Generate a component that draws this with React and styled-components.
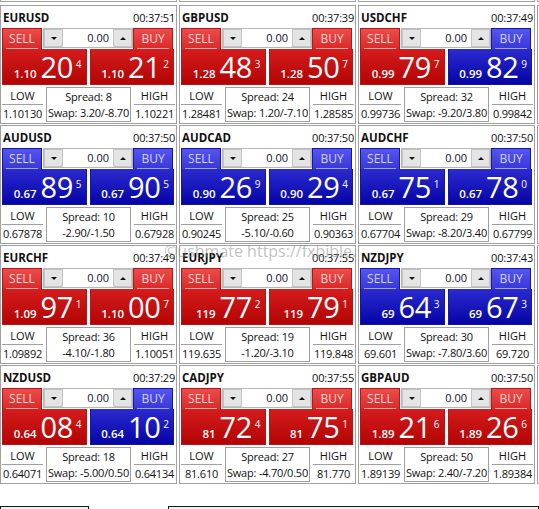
import React from "react";
import styled, { createGlobalStyle } from "styled-components";

const Global = createGlobalStyle`
  html, body { margin: 0; padding: 0; background: #ffffff; }
  body { font-family: "Open Sans", "Noto Sans", sans-serif; color: #111; }
`;

const palette = {
  red: {
    tabTop: "#ec4c4a",
    tabBottom: "#d92a28",
    panelTop: "#d61c1c",
    panelBottom: "#b20404",
    edge: "#b81616",
    text: "#ffd4d4",
    line: "#f4a4a4",
  },
  blue: {
    tabTop: "#5454f2",
    tabBottom: "#3838da",
    panelTop: "#2a2ad0",
    panelBottom: "#0505a6",
    edge: "#16169e",
    text: "#d4d4ff",
    line: "#a4a4f4",
  },
};

const tiles = [
  { sym: "EURUSD", time: "00:37:51", sell: ["1.10", "20", "4"], buy: ["1.10", "21", "2"], sc: "red", bc: "red", low: "1.10130", spread: "8", swap: "Swap: 3.20/-8.70", high: "1.10221" },
  { sym: "GBPUSD", time: "00:37:39", sell: ["1.28", "48", "3"], buy: ["1.28", "50", "7"], sc: "red", bc: "red", low: "1.28481", spread: "24", swap: "Swap: 1.20/-7.10", high: "1.28585" },
  { sym: "USDCHF", time: "00:37:49", sell: ["0.99", "79", "7"], buy: ["0.99", "82", "9"], sc: "red", bc: "blue", low: "0.99736", spread: "32", swap: "Swap: -9.20/3.80", high: "0.99842" },
  { sym: "AUDUSD", time: "00:37:50", sell: ["0.67", "89", "5"], buy: ["0.67", "90", "5"], sc: "blue", bc: "blue", low: "0.67878", spread: "10", swap: "-2.90/-1.50", high: "0.67928" },
  { sym: "AUDCAD", time: "00:37:50", sell: ["0.90", "26", "9"], buy: ["0.90", "29", "4"], sc: "blue", bc: "blue", low: "0.90245", spread: "25", swap: "-5.10/-0.60", high: "0.90363" },
  { sym: "AUDCHF", time: "00:37:50", sell: ["0.67", "75", "1"], buy: ["0.67", "78", "0"], sc: "blue", bc: "blue", low: "0.67704", spread: "29", swap: "Swap: -8.20/3.40", high: "0.67799" },
  { sym: "EURCHF", time: "00:37:49", sell: ["1.09", "97", "1"], buy: ["1.10", "00", "7"], sc: "red", bc: "red", low: "1.09892", spread: "36", swap: "-4.10/-1.80", high: "1.10051" },
  { sym: "EURJPY", time: "00:37:55", sell: ["119", "77", "2"], buy: ["119", "79", "1"], sc: "red", bc: "red", low: "119.635", spread: "19", swap: "-1.20/-3.10", high: "119.848" },
  { sym: "NZDJPY", time: "00:37:43", sell: ["69", "64", "3"], buy: ["69", "67", "3"], sc: "blue", bc: "blue", low: "69.601", spread: "30", swap: "Swap: -7.80/3.60", high: "69.720" },
  { sym: "NZDUSD", time: "00:37:29", sell: ["0.64", "08", "4"], buy: ["0.64", "10", "2"], sc: "red", bc: "blue", low: "0.64071", spread: "18", swap: "Swap: -5.00/0.50", high: "0.64134" },
  { sym: "CADJPY", time: "00:37:55", sell: ["81", "72", "4"], buy: ["81", "75", "1"], sc: "red", bc: "red", low: "81.610", spread: "27", swap: "Swap: -4.70/0.50", high: "81.770" },
  { sym: "GBPAUD", time: "00:37:50", sell: ["1.89", "21", "6"], buy: ["1.89", "26", "6"], sc: "red", bc: "red", low: "1.89139", spread: "50", swap: "Swap: 2.40/-7.20", high: "1.89384" },
];

const Page = styled.div`
  position: relative;
  width: 539px;
  height: 509px;
  overflow: hidden;
  background: #fff;
`;

const StubRow = styled.div`
  display: grid;
  grid-template-columns: repeat(4, 177px);
  column-gap: 2px;
  margin-bottom: 3px;
`;

const Stub = styled.div`
  height: 2px;
  box-sizing: border-box;
  border: 1px solid #a0a0a0;
  border-top: none;
`;

const Grid = styled.div`
  display: grid;
  grid-template-columns: repeat(4, 177px);
  grid-auto-rows: 119px;
  column-gap: 2px;
  row-gap: 1px;
`;

const Tile = styled.div`
  box-sizing: border-box;
  border: 1px solid #a0a0a0;
  background: #fff;
  display: flex;
  flex-direction: column;
  overflow: hidden;
`;

const Header = styled.div`
  height: 22px;
  display: flex;
  align-items: center;
  justify-content: space-between;
  padding: 1px 1px 0 2px;
  box-sizing: border-box;
  font-size: 11px;
  color: #111;
`;

const Symbol = styled.span`
  font-weight: 700;
  font-size: 11.5px;
`;

const Clock = styled.span`
  letter-spacing: -0.2px;
`;

const Trade = styled.div`
  margin: 0 2px 0 1px;
  display: flex;
  flex-direction: column;
`;

const TopRow = styled.div`
  height: 21px;
  display: flex;
  align-items: flex-start;
`;

const Tab = styled.div`
  width: 40px;
  height: 21px;
  box-sizing: border-box;
  padding: 0 3px;
  border: 1px solid ${(p) => palette[p.$c].edge};
  border-bottom: none;
  background: linear-gradient(
    to bottom,
    ${(p) => palette[p.$c].tabTop},
    ${(p) => palette[p.$c].tabBottom}
  );
  display: flex;
`;

const TabLabel = styled.span`
  flex: 1;
  text-align: center;
  font-size: 12px;
  line-height: 19px;
  height: 19px;
  color: ${(p) => palette[p.$c].text};
  border-bottom: 1px solid ${(p) => palette[p.$c].line};
`;

const Spinner = styled.div`
  width: 90px;
  height: 20px;
  margin-left: 1px;
  box-sizing: border-box;
  border: 1px solid #b8b8b8;
  background: #fff;
  display: flex;
`;

const SpinButton = styled.div`
  width: 19px;
  box-sizing: border-box;
  background: #e4e4e4;
  border: 1px solid #c4c4c4;
  display: flex;
  align-items: center;
  justify-content: center;
`;

const Arrow = styled.span`
  width: 0;
  height: 0;
  border-left: 3px solid transparent;
  border-right: 3px solid transparent;
  ${(p) =>
    p.$up
      ? "border-bottom: 3px solid #111;"
      : "border-top: 3px solid #111;"}
`;

const SpinValue = styled.div`
  flex: 1;
  text-align: right;
  padding-right: 4px;
  font-size: 11px;
  line-height: 18px;
  color: #101030;
`;

const Panels = styled.div`
  height: 36px;
  display: flex;
  gap: 3px;
`;

const Panel = styled.div`
  flex: 1;
  box-sizing: border-box;
  border: 1px solid ${(p) => palette[p.$c].edge};
  border-top: none;
  background: linear-gradient(
    to bottom,
    ${(p) => palette[p.$c].panelTop},
    ${(p) => palette[p.$c].panelBottom}
  );
  display: flex;
  justify-content: flex-end;
  align-items: baseline;
  padding: 3px 4px 0 0;
  color: #fff;
`;

const Handle = styled.span`
  font-size: 11.5px;
  font-weight: 600;
  line-height: 1;
  margin-right: 4px;
`;

const Pips = styled.span`
  font-size: 29px;
  line-height: 29px;
  letter-spacing: -0.5px;
`;

const Fraction = styled.span`
  align-self: flex-start;
  font-size: 10px;
  line-height: 10px;
  margin: 7px 0 0 3px;
`;

const Stats = styled.div`
  margin: 2px 1px 0 1px;
  height: 35px;
  display: flex;
  gap: 3px;
  font-size: 11px;
  color: #111;
`;

const Extreme = styled.div`
  width: 41px;
  display: flex;
  flex-direction: column;
  text-align: center;
`;

const ExtremeLabel = styled.div`
  height: 17px;
  line-height: 18px;
  border-bottom: 1px solid #a0a0a0;
`;

const ExtremeValue = styled.div`
  line-height: 17px;
  white-space: nowrap;
  letter-spacing: -0.2px;
`;

const SpreadBox = styled.div`
  width: 85px;
  box-sizing: border-box;
  border: 1px solid #a0a0a0;
  display: flex;
  flex-direction: column;
  text-align: center;
`;

const SpreadLine = styled.div`
  height: 16px;
  line-height: 17px;
  white-space: nowrap;
  letter-spacing: -0.2px;
`;

const Footer = styled.div`
  margin-top: 22px;
  display: flex;
  gap: 79px;
`;

const FooterBox = styled.div`
  width: ${(p) => (p.$grow ? "auto" : "89px")};
  flex: ${(p) => (p.$grow ? 1 : "none")};
  height: 20px;
  box-sizing: border-box;
  border: 1px solid #1a1a1a;
  background: #f0f0f0;
`;

const Watermark = styled.div`
  position: absolute;
  left: 164px;
  top: 240px;
  width: 192px;
  overflow: hidden;
  white-space: nowrap;
  font-family: "Open Sans", sans-serif;
  font-size: 16px;
  color: rgba(140, 140, 140, 0.55);
  pointer-events: none;
`;

function Side({ c, price }) {
  return (
    <Panel $c={c}>
      <Handle>{price[0]}</Handle>
      <Pips>{price[1]}</Pips>
      <Fraction>{price[2]}</Fraction>
    </Panel>
  );
}

function Card({ t }) {
  return (
    <Tile>
      <Header>
        <Symbol>{t.sym}</Symbol>
        <Clock>{t.time}</Clock>
      </Header>
      <Trade>
        <TopRow>
          <Tab $c={t.sc}>
            <TabLabel $c={t.sc}>SELL</TabLabel>
          </Tab>
          <Spinner>
            <SpinButton>
              <Arrow />
            </SpinButton>
            <SpinValue>0.00</SpinValue>
            <SpinButton>
              <Arrow $up />
            </SpinButton>
          </Spinner>
          <Tab $c={t.bc}>
            <TabLabel $c={t.bc}>BUY</TabLabel>
          </Tab>
        </TopRow>
        <Panels>
          <Side c={t.sc} price={t.sell} />
          <Side c={t.bc} price={t.buy} />
        </Panels>
      </Trade>
      <Stats>
        <Extreme>
          <ExtremeLabel>LOW</ExtremeLabel>
          <ExtremeValue>{t.low}</ExtremeValue>
        </Extreme>
        <SpreadBox>
          <SpreadLine>Spread: {t.spread}</SpreadLine>
          <SpreadLine>{t.swap}</SpreadLine>
        </SpreadBox>
        <Extreme>
          <ExtremeLabel>HIGH</ExtremeLabel>
          <ExtremeValue>{t.high}</ExtremeValue>
        </Extreme>
      </Stats>
    </Tile>
  );
}

export default function App() {
  const rows = [0, 1, 2, 3];
  return (
    <Page>
      <Global />
      <StubRow>
        {[0, 1, 2, 3].map((i) => (
          <Stub key={i} />
        ))}
      </StubRow>
      <Grid>
        {rows.map((r) => (
          <React.Fragment key={r}>
            {tiles.slice(r * 3, r * 3 + 3).map((t) => (
              <Card key={t.sym} t={t} />
            ))}
            <Tile />
          </React.Fragment>
        ))}
      </Grid>
      <Footer>
        <FooterBox />
        <FooterBox $grow />
      </Footer>
      <Watermark>©ushmate https://fxbible.biz</Watermark>
    </Page>
  );
}
